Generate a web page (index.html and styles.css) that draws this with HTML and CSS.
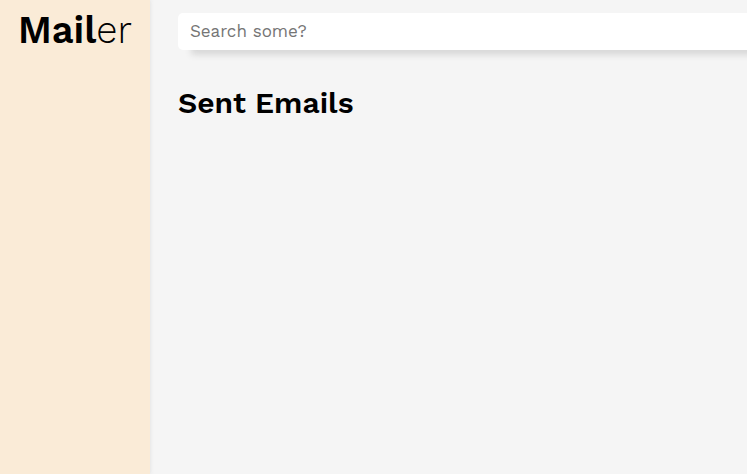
FILE: index.html
```html
<!DOCTYPE html>
<html lang="en">
<head>
<meta charset="utf-8">
<title>Mailer</title>
<link rel="stylesheet" href="styles.css">
</head>
<body>
<div class="app">
  <aside class="sidebar">
    <a class="brand" href="#"><span class="brand-strong">Mail</span>er</a>
  </aside>
  <main class="content">
    <form class="search" role="search">
      <input class="search-input" type="search" aria-label="Search emails" placeholder="Search some?">
    </form>
    <h1 class="title">Sent Emails</h1>
  </main>
</div>
</body>
</html>
```
FILE: styles.css
```css
* {
  box-sizing: border-box;
}

body {
  margin: 0;
  font-family: "Work Sans", Inter, "Liberation Sans", sans-serif;
  color: #000;
  background: whitesmoke;
}

.app {
  display: flex;
  min-height: 100vh;
  overflow: hidden;
}

.sidebar {
  flex: none;
  padding: 6px 18px 0;
  background: antiquewhite;
  box-shadow: 0 0 4px #ddd;
}

.brand {
  display: block;
  color: inherit;
  font-size: 38px;
  font-weight: 300;
  line-height: 48px;
  text-decoration: none;
}

.brand-strong {
  font-weight: 600;
}

.content {
  flex: 1;
  min-width: 0;
  padding: 13px 0 0 28px;
}

.search {
  margin: 0 -16px 0 0;
}

.search-input {
  display: block;
  width: 100%;
  height: 37px;
  padding: 0 12px 2px;
  border: 0;
  border-radius: 5px;
  background: #fff;
  box-shadow: 10px 8px 6px -3px #d8d8d8;
  font: 400 17px "Work Sans", Inter, "Liberation Sans", sans-serif;
}

.search-input::placeholder {
  color: #757575;
}

.title {
  margin: 35px 0 0;
  font-size: 30px;
  font-weight: 600;
  line-height: 36px;
}
```
